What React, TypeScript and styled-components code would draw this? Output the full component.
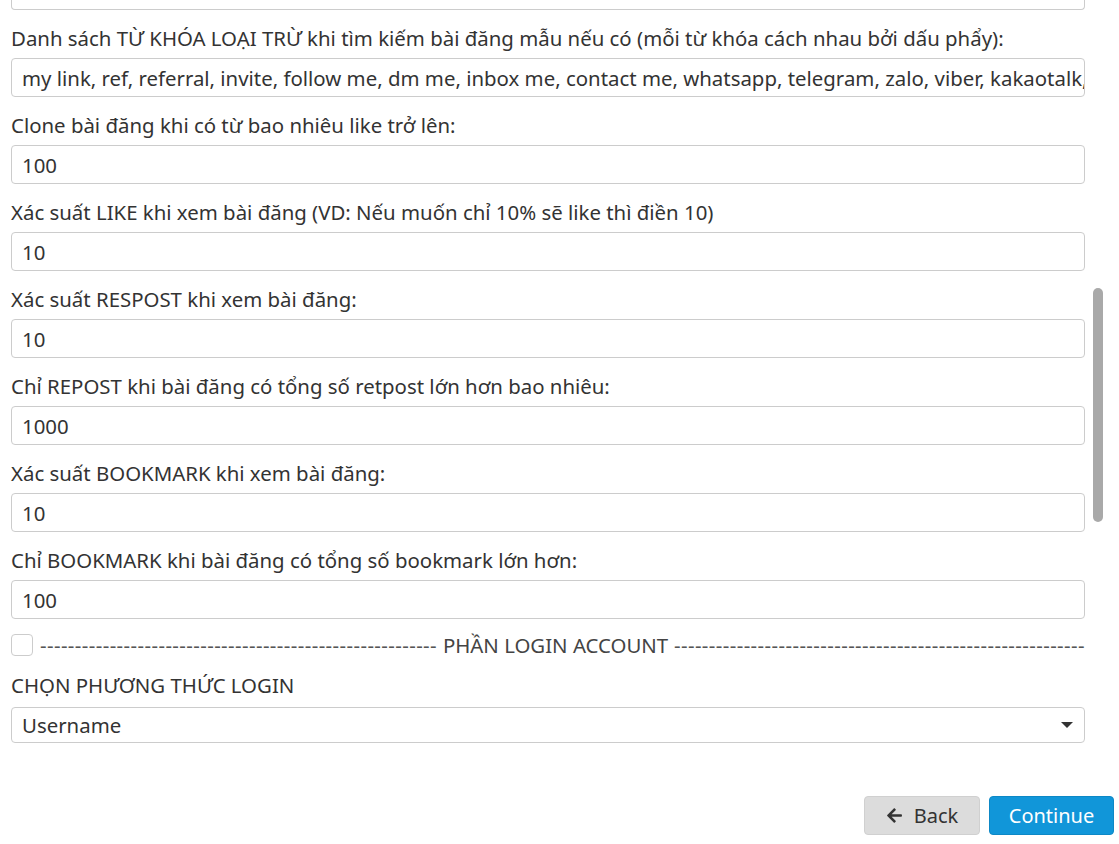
import { createGlobalStyle } from "styled-components";
import styled from "styled-components";
import { FaArrowLeft } from "react-icons/fa";

const GlobalStyle = createGlobalStyle`
  html, body {
    margin: 0;
    padding: 0;
    background: #fff;
    overflow: hidden;
  }
  body {
    font-family: "Noto Sans", "Open Sans", sans-serif;
    color: #333;
  }
`;

const fields = [
  {
    label:
      "Danh sách TỪ KHÓA LOẠI TRỪ khi tìm kiếm bài đăng mẫu nếu có (mỗi từ khóa cách nhau bởi dấu phẩy):",
    value:
      "my link, ref, referral, invite, follow me, dm me, inbox me, contact me, whatsapp, telegram, zalo, viber, kakaotalk, signal, line",
  },
  { label: "Clone bài đăng khi có từ bao nhiêu like trở lên:", value: "100" },
  {
    label: "Xác suất LIKE khi xem bài đăng (VD: Nếu muốn chỉ 10% sẽ like thì điền 10)",
    value: "10",
  },
  { label: "Xác suất RESPOST khi xem bài đăng:", value: "10" },
  {
    label: "Chỉ REPOST khi bài đăng có tổng số retpost lớn hơn bao nhiêu:",
    value: "1000",
  },
  { label: "Xác suất BOOKMARK khi xem bài đăng:", value: "10" },
  {
    label: "Chỉ BOOKMARK khi bài đăng có tổng số bookmark lớn hơn:",
    value: "100",
  },
];

const App = () => {
  return (
    <Page>
      <GlobalStyle />
      <Form>
        <CutInput />
        {fields.map(({ label, value }) => (
          <Group key={label}>
            <Label>{label}</Label>
            <Input>{value}</Input>
          </Group>
        ))}
        <Divider>
          <CheckBox />
          <DividerText>
            <span>{"-".repeat(57)}</span>
            <DividerTitle>PHẦN LOGIN ACCOUNT</DividerTitle>
            <span>{"-".repeat(59)}</span>
          </DividerText>
        </Divider>
        <SelectLabel>CHỌN PHƯƠNG THỨC LOGIN</SelectLabel>
        <Select>
          <span>Username</span>
          <Caret />
        </Select>
      </Form>
      <Footer>
        <BackButton>
          <FaArrowLeft size={17} />
          Back
        </BackButton>
        <ContinueButton>Continue</ContinueButton>
      </Footer>
      <ScrollThumb />
    </Page>
  );
};

const Page = styled.div`
  position: relative;
  width: 1119px;
  height: 844px;
  padding: 0 5px 0 11px;
  box-sizing: border-box;
  font-size: 20.4px;
`;

const Form = styled.div`
  padding-right: 29px;
  display: flex;
  flex-direction: column;
`;

const Input = styled.div`
  height: 39px;
  box-sizing: border-box;
  border: 1px solid #ccc;
  border-radius: 4px;
  padding: 0 10px;
  display: flex;
  align-items: center;
  white-space: nowrap;
  overflow: hidden;
  color: #333;
  background: #fff;
`;

const CutInput = styled(Input)`
  height: 10px;
  border-top: none;
  border-top-left-radius: 0;
  border-top-right-radius: 0;
`;

const Group = styled.div`
  margin-top: 14px;
  display: flex;
  flex-direction: column;
`;

const Label = styled.div`
  line-height: 28px;
  margin-bottom: 6px;
  white-space: nowrap;
`;

const Divider = styled.div`
  margin-top: 12px;
  height: 28px;
  display: flex;
  align-items: center;
  color: #444;
`;

const CheckBox = styled.span`
  width: 20px;
  height: 20px;
  border: 1px solid #ccc;
  border-radius: 4px;
  flex: none;
  margin-right: 7px;
`;

const DividerText = styled.div`
  flex: 1;
  display: flex;
  justify-content: space-between;
  white-space: nowrap;
  letter-spacing: 0.4px;
  color: #555;
`;

const DividerTitle = styled.span`
  letter-spacing: 0;
  color: #444;
`;

const SelectLabel = styled(Label)`
  margin-top: 12px;
  margin-bottom: 8px;
`;

const Select = styled(Input)`
  height: 36px;
  justify-content: space-between;
`;

const Caret = styled.span`
  width: 0;
  height: 0;
  border-left: 6px solid transparent;
  border-right: 6px solid transparent;
  border-top: 6px solid #333;
  margin-right: 1px;
`;

const Footer = styled.div`
  display: flex;
  justify-content: flex-end;
  gap: 9px;
  margin-top: 53px;
`;

const Button = styled.button`
  height: 39px;
  border-radius: 4px;
  font-family: inherit;
  font-size: 20px;
  display: flex;
  align-items: center;
  justify-content: center;
  gap: 11px;
  cursor: pointer;
`;

const BackButton = styled(Button)`
  width: 116px;
  background: #dcdcdc;
  border: 1px solid #d0d0d0;
  color: #333;
`;

const ContinueButton = styled(Button)`
  width: 125px;
  background: #1196d9;
  border: 1px solid #0d88c6;
  color: #fff;
`;

const ScrollThumb = styled.div`
  position: absolute;
  left: 1093px;
  top: 288px;
  width: 10px;
  height: 234px;
  border-radius: 5px;
  background: #a9a9a9;
`;

export default App;
